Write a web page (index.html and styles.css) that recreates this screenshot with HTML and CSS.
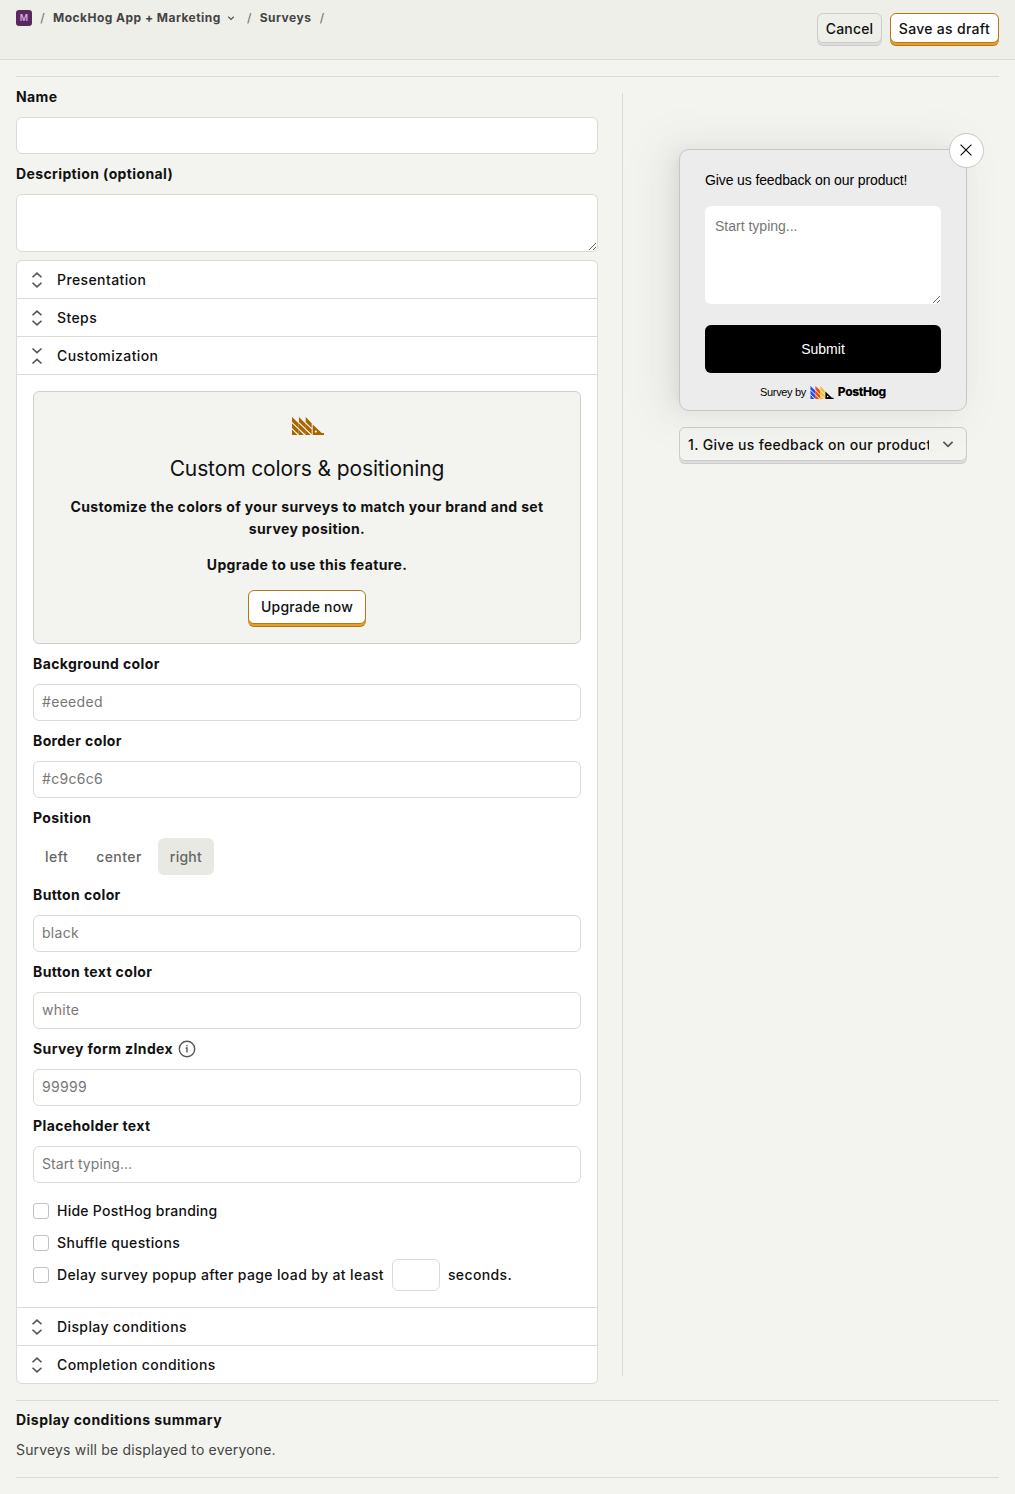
FILE: index.html
```html
<!DOCTYPE html>
<html lang="en">
<head>
<meta charset="utf-8">
<title>New survey</title>
<link rel="stylesheet" href="styles.css">
</head>
<body>
<svg class="defs" width="0" height="0">
  <symbol id="expand" viewBox="0 0 24 24"><path d="M6.600 8.700L12 3.700l5.400 5M6.600 15.300l5.400 5 5.400-5"/></symbol>
  <symbol id="collapse" viewBox="0 0 24 24"><path d="M6.600 3l5.400 5 5.400-5M6.600 21l5.400-5 5.400 5"/></symbol>
  <symbol id="chevron" viewBox="0 0 24 24"><path d="M6.500 9.500l5.500 5.200 5.500-5.200"/></symbol>
  <symbol id="stripes" viewBox="0 0 32 18">
    <g class="s1"><path d="M0 0l6.500 6.300v4.700L0 4.700zM0 6.300l6.500 6.300v4.700L0 11zM0 12.600L5.400 18H0z"/></g>
    <g class="s2"><path d="M6.900 0l6.300 6.300v4.700L6.900 4.900zM6.500 6.300l6.700 6.300v4.700L6.500 11zM6.500 12.600l5.400 5.400H7.200l-.7-.7z"/></g>
    <g class="s3"><path d="M13.700 0l6 6.300v4.700l-6-5.900zM13.200 6.300l6.500 6.300v4.700L13.200 11zM13.200 12.600l5.400 5.400h-4.700l-.7-.7z"/></g>
    <path class="s4" fill-rule="evenodd" d="M20.700 7.500l9 8.600H32V18H20.700zM23.800 13.500a1.100 1.100 0 1 0 .01 2.200a1.100 1.100 0 1 0-.01-2.200z"/>
  </symbol>
</svg>
<header class="topbar">
  <nav class="crumbs">
    <span class="avatar">M</span><i>/</i><b>MockHog App + Marketing</b>
    <svg class="icon tiny"><use href="#chevron"/></svg><i class="after">/</i><b>Surveys</b><i>/</i>
  </nav>
  <div class="actions">
    <button class="btn cancel">Cancel</button>
    <button class="btn primary">Save as draft</button>
  </div>
</header>
<main>
  <div class="editor">
    <section class="form">
      <label class="label">Name</label>
      <input class="input">
      <label class="label">Description (optional)</label>
      <textarea class="input area"></textarea>
      <div class="accordion">
        <div class="head"><svg class="icon"><use href="#expand"/></svg>Presentation</div>
        <div class="head"><svg class="icon"><use href="#expand"/></svg>Steps</div>
        <div class="head"><svg class="icon"><use href="#collapse"/></svg>Customization</div>
        <div class="panel">
          <div class="paywall">
            <svg class="mark"><use href="#stripes"/></svg>
            <h3>Custom colors &amp; positioning</h3>
            <p>Customize the colors of your surveys to match your brand and set survey position.</p>
            <p>Upgrade to use this feature.</p>
            <button class="btn primary wide">Upgrade now</button>
          </div>
          <label class="label">Background color</label>
          <input class="input" placeholder="#eeeded">
          <label class="label">Border color</label>
          <input class="input" placeholder="#c9c6c6">
          <label class="label">Position</label>
          <div class="segments"><span>left</span><span>center</span><span class="on">right</span></div>
          <label class="label">Button color</label>
          <input class="input" placeholder="black">
          <label class="label">Button text color</label>
          <input class="input" placeholder="white">
          <label class="label">Survey form zIndex
            <svg class="info" viewBox="0 0 18 18"><circle cx="9" cy="9" r="7.700"/><path d="M7.600 8H9v4.500M9 5v1.300"/></svg></label>
          <input class="input" placeholder="99999">
          <label class="label">Placeholder text</label>
          <input class="input typing" placeholder="Start typing...">
          <div class="checks">
            <div class="check"><span class="box"></span>Hide PostHog branding</div>
            <div class="check"><span class="box"></span>Shuffle questions</div>
            <div class="check"><span class="box"></span>Delay survey popup after page load by at least<input class="input small">seconds.</div>
          </div>
        </div>
        <div class="head"><svg class="icon"><use href="#expand"/></svg>Display conditions</div>
        <div class="head"><svg class="icon"><use href="#expand"/></svg>Completion conditions</div>
      </div>
    </section>
    <aside class="preview">
      <div class="survey">
        <span class="close"><svg viewBox="0 0 12 12"><path d="M.6.6l10.800 10.800M11.400.6L.6 11.400"/></svg></span>
        <div class="question">Give us feedback on our product!</div>
        <textarea class="answer" placeholder="Start typing..."></textarea>
        <div class="submit">Submit</div>
        <div class="brand"><span>Survey by</span><svg class="logo"><use href="#stripes"/></svg><b>PostHog</b></div>
      </div>
      <button class="btn select"><span>1. Give us feedback on our product!</span><svg class="icon"><use href="#chevron"/></svg></button>
    </aside>
  </div>
  <footer>
    <h4>Display conditions summary</h4>
    <div>Surveys will be displayed to everyone.</div>
  </footer>
</main>
</body>
</html>
```
FILE: styles.css
```css
* { box-sizing: border-box; }
body { margin: 0; background: #f3f4ef; color: #111; font: 14px/20px Inter, sans-serif; }
.defs { display: block; height: 0; }
button, input, textarea { font: inherit; color: inherit; letter-spacing: inherit; }
.topbar { display: flex; justify-content: space-between; height: 60px; padding: 10px 16px 0; background: #eeefe9; border-bottom: 1px solid #dadbd6; }
.crumbs { display: flex; align-items: center; height: 16px; font-size: 12px; line-height: 16px; color: #444; }
.crumbs b { font-weight: 700; letter-spacing: .47px; }
.crumbs i { width: 21px; text-align: center; color: #777; font-style: normal; font-weight: 500; }
.crumbs .after { margin-left: 2px; }
.avatar { display: grid; place-items: center; width: 16px; height: 16px; border-radius: 3px; background: #572a5e; color: #dba8e4; font-size: 9px; font-weight: 600; }
.icon { flex: none; width: 20px; height: 20px; fill: none; stroke: #555; stroke-width: 2; }
.icon.tiny { width: 12px; height: 12px; margin-left: 4px; stroke-width: 2.400; }
.actions { display: flex; gap: 8px; padding-top: 3px; letter-spacing: .3px; }
.btn { height: 30px; padding: 1px 8px 0; border: 1px solid #ccc; border-radius: 6px; background: #f3f4ef; box-shadow: 0 2px 0 #dedcdc, 0 3px 0 #ccc; font-weight: 500; white-space: nowrap; }
.topbar .btn { background: #eeefe9; }
.cancel { width: 65px; letter-spacing: .15px; }
.topbar .btn.primary, .btn.primary { background: #fff; border-color: #b17816; box-shadow: 0 2px 0 #eb9d2a, 0 3px 0 #b17816; }
.btn.wide { height: 34px; padding: 0 12px; letter-spacing: .18px; }
main { padding: 16px 16px 0; }
.editor { display: flex; border-top: 1px solid #dadbd3; }
.form { width: 582px; padding-top: 10px; }
.label { display: flex; align-items: center; height: 20px; margin-bottom: 10px; font-weight: 700; letter-spacing: .38px; }
.input { display: block; width: 100%; height: 37px; margin: 0 0 10px; padding: 0 8px 2px; border: 1px solid #dadbd3; border-radius: 6px; background: #fff; outline: 0; letter-spacing: .3px; }
.typing { letter-spacing: .07px; }
.input::placeholder { color: #777; }
.area { height: 58px; margin-bottom: 8px; }
.accordion { background: #fff; border: 1px solid #dadbd3; border-radius: 6px; }
.head { display: flex; align-items: center; gap: 10px; height: 38px; padding-left: 10px; border-bottom: 1px solid #dadbd3; font-weight: 500; letter-spacing: .4px; }
.head:last-child { border: 0; height: 37px; }
.panel { padding: 16px 16px 0; height: 933px; border-bottom: 1px solid #dadbd3; }
.paywall { display: flex; flex-direction: column; align-items: center; height: 253px; margin-bottom: 10px; padding: 25px 24px 0; border: 1px solid #cfd0cb; border-radius: 6px; background: #f3f4ef; text-align: center; }
.mark { width: 32px; height: 18px; margin-left: 2px; fill: #a86400; }
h3 { margin: 20px 0 13px; font-size: 21px; line-height: 28px; font-weight: 400; letter-spacing: -.12px; }
.paywall p { margin: 0 0 14px; font-weight: 700; line-height: 22px; letter-spacing: .37px; }
.segments { display: flex; gap: 4px; margin-bottom: 10px; }
.segments span { height: 37px; padding: 0 12px; border-radius: 6px; line-height: 37px; color: #666; font-weight: 500; letter-spacing: .45px; }
.segments .on { width: 56px; letter-spacing: .25px; background: #e8e9e2; }
.info { width: 18px; height: 18px; margin-left: 5px; fill: none; stroke: #555; stroke-width: 1.400; }
.checks { padding-top: 2px; }
.check { display: flex; align-items: center; height: 32px; gap: 8px; font-weight: 500; letter-spacing: .36px; }
.check:first-child { letter-spacing: .25px; }
.box { width: 16px; height: 16px; border: 1px solid #c2c2c2; border-radius: 3px; background: #fff; }
.small { width: 48px; height: 32px; margin: 0; }
.preview { display: flex; flex-direction: column; align-items: center; width: 377px; height: 1283px; margin: 16px 0 0 24px; padding-top: 56px; border-left: 1px solid #dadbd3; }
.survey { position: relative; width: 288px; height: 262px; margin-left: 24px; padding: 20px 25px 0; border: 1px solid #c9c6c6; border-radius: 10px; background: #ececec; box-shadow: -6px 0 16px -8px rgba(0,0,0,.08), -9px 0 28px rgba(0,0,0,.05), -12px 0 48px 16px rgba(0,0,0,.03); font-family: "Liberation Sans", sans-serif; color: #000; }
.close { position: absolute; top: -17.500px; right: -17.500px; display: grid; place-items: center; width: 35px; height: 35px; border: 1px solid #c9c6c6; border-radius: 50%; background: #fff; }
.close svg { width: 12px; height: 12px; stroke: #000; stroke-width: 1.100; }
.question { height: 36px; letter-spacing: -.12px; }
.answer { display: block; width: 236px; height: 98px; padding: 10px; border: 0; border-radius: 6px; background: #fff; outline: 0; }
.answer::placeholder { color: #777; }
.submit { height: 48px; margin-top: 21px; border-radius: 6px; background: #000; color: #fff; line-height: 48px; text-align: center; }
.brand { display: flex; justify-content: center; align-items: center; height: 38px; font: 11px/16px "Liberation Sans", sans-serif; }
.brand span { letter-spacing: -.35px; }
.brand svg { width: 24px; height: 13px; margin: 0 4px; }
.brand b { font: 800 12px/16px Inter, sans-serif; letter-spacing: -.38px; }
.logo { --a: #1d4aff; --b: #f54e00; --c: #f9bd2b; }
.s1 { fill: var(--a, inherit); }
.s2 { fill: var(--b, inherit); }
.s3 { fill: var(--c, inherit); }
.select { display: flex; align-items: center; justify-content: space-between; width: 288px; height: 34px; margin: 16px 0 0 24px; }
.select span { width: 241px; overflow: hidden; white-space: nowrap; text-align: left; letter-spacing: .33px; }
.select .icon { margin-top: -1px; }
footer { height: 78px; margin-top: 16px; padding-top: 9px; border: solid #dadbd3; border-width: 1px 0; color: #444; letter-spacing: .17px; }
h4 { margin: 0 0 10px; color: #111; font-size: 14px; letter-spacing: .46px; }
```
